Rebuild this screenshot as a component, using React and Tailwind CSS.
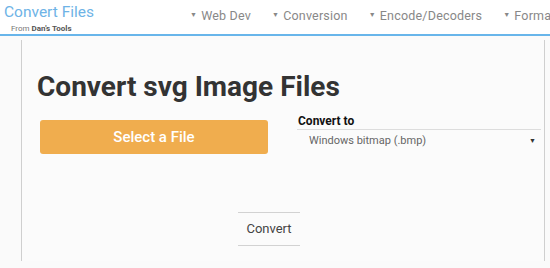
import React from "react";

function Caret() {
  return <span className="inline-block text-[7px] mr-[4px] relative -top-[1px]">▼</span>;
}

export default function App() {
  const navItems = ["Web Dev", "Conversion", "Encode/Decoders", "Formats"];

  return (
    <div className="w-[550px] h-[268px] overflow-hidden bg-[#fafafa] font-['Roboto',sans-serif]">
      {/* Header */}
      <div className="h-[36px] flex border-b-2 border-[#68b5ea] bg-white">
        <div className="w-[190px] shrink-0 pl-[4px] pt-[2px]">
          <div className="text-[15.5px] leading-[20px] text-[#6eb3e6]">Convert Files</div>
          <div className="pl-[7px] pt-[2px] text-[8px] leading-[9px] text-[#777]">
            From <span className="font-bold text-[#555]">Dan's Tools</span>
          </div>
        </div>
        <div className="flex gap-[21px] pt-[8px] text-[12.5px] tracking-[0.2px] text-[#888] whitespace-nowrap">
          {navItems.map((item) => (
            <div key={item} className="flex items-center h-[16px]">
              <Caret />
              {item}
            </div>
          ))}
        </div>
      </div>

      {/* Main container */}
      <div className="ml-[21px] w-[524px] h-[221px] mt-[4px] border-x border-[#cfcfcf] bg-[#fbfbfb]">
        <h1 className="pl-[15px] pt-[30px] text-[28px] leading-[34px] font-bold text-[#333]">
          Convert svg Image Files
        </h1>

        <div className="flex mt-[16px]">
          <button
            type="button"
            className="ml-[18px] w-[228px] h-[34px] rounded-[3px] bg-[#f0ad4e] text-white text-[15px] font-medium"
          >
            Select a File
          </button>
          <div className="ml-[29px] w-[244px] -mt-[6px]">
            <div className="text-[12px] font-bold leading-[14px] text-[#111] border-b border-[#ddd] pb-[1px] pl-[1px]">
              Convert to
            </div>
            <div className="flex justify-between items-center pl-[12px] pr-[5px] h-[23px] text-[11px] text-[#666]">
              <span>Windows bitmap (.bmp)</span>
              <span className="text-[7px] text-[#333]">▼</span>
            </div>
          </div>
        </div>

        <div className="mt-[58px] pl-[216px]">
          <button
            type="button"
            className="w-[62px] h-[34px] border-y border-[#d2d2d2] text-[13px] text-[#444]"
          >
            Convert
          </button>
        </div>
      </div>
    </div>
  );
}
